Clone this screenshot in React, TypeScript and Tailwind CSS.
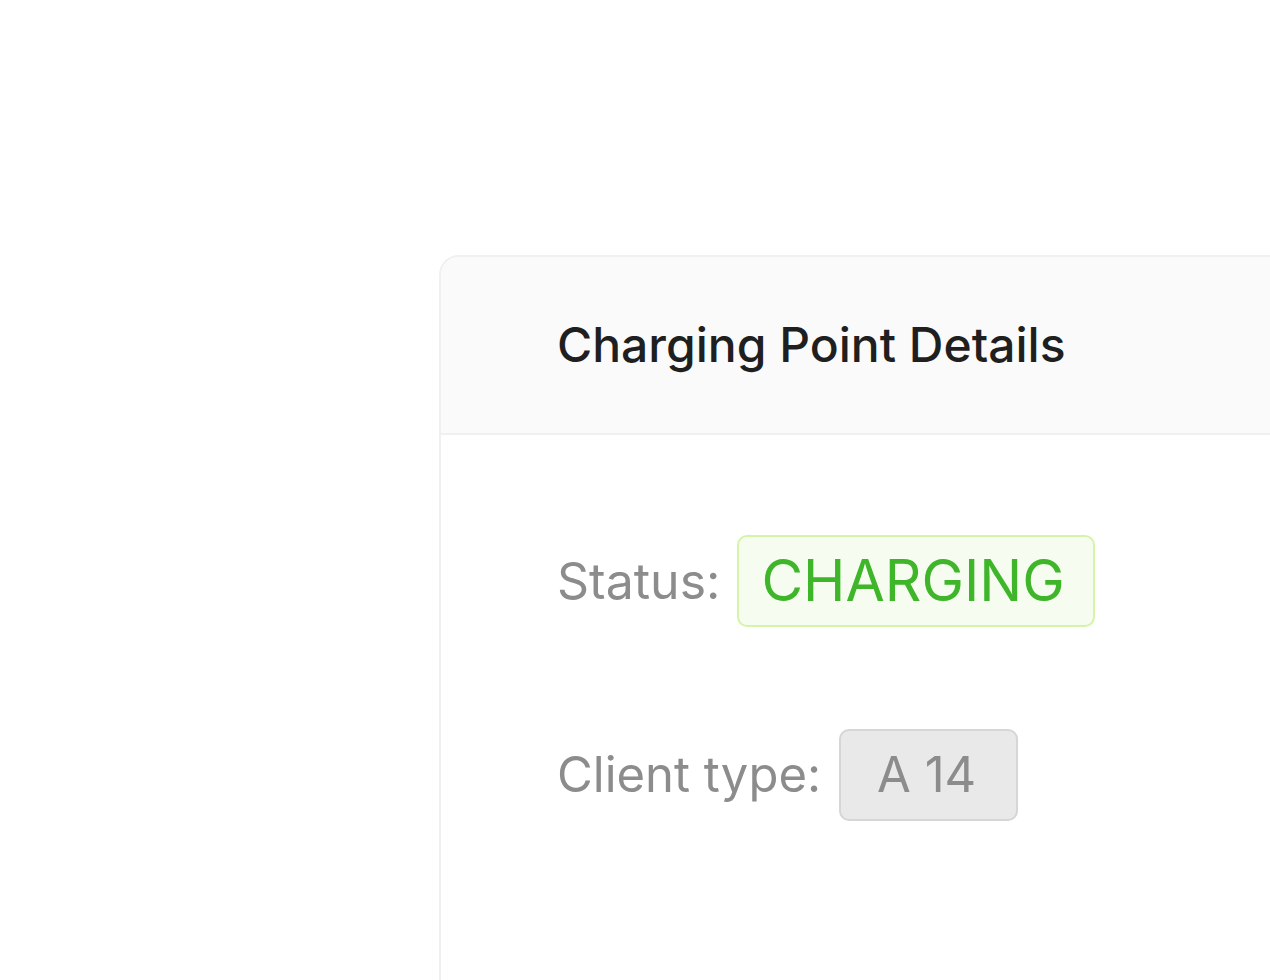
export default function App() {
  return (
    <div className="min-h-screen bg-white overflow-hidden font-['Inter',sans-serif]">
      <div className="pt-[255px] pl-[439px]">
        <div className="w-[1000px] h-[800px] rounded-t-[20px] border-2 border-[#f0f0f0] bg-white">
          <div className="h-[178px] flex items-center pl-[116px] bg-[#fafafa] rounded-t-[18px] border-b-2 border-[#f0f0f0]">
            <h1 className="text-[48px] font-medium text-[#1f1f1f] leading-none">Charging Point Details</h1>
          </div>
          <div className="pl-[116px] pt-[100px] flex flex-col gap-[102px]">
            <div className="flex items-center gap-[17px]">
              <span className="text-[50px] text-[#8c8c8c]">Status:</span>
              <span className="h-[92px] flex items-center pl-[22px] pr-[28px] rounded-[10px] border-2 border-[#d3f4a9] bg-[#f6fdf0] text-[57px] text-[#3fb52a]">
                CHARGING
              </span>
            </div>
            <div className="flex items-center gap-[18px]">
              <span className="text-[49px] text-[#8c8c8c]">Client type:</span>
              <span className="h-[92px] flex items-center pl-[36px] pr-[40px] rounded-[10px] border-2 border-[#d6d6d6] bg-[#e9e9e9] text-[49px] text-[#8c8c8c]">
                A 14
              </span>
            </div>
          </div>
        </div>
      </div>
    </div>
  );
}
